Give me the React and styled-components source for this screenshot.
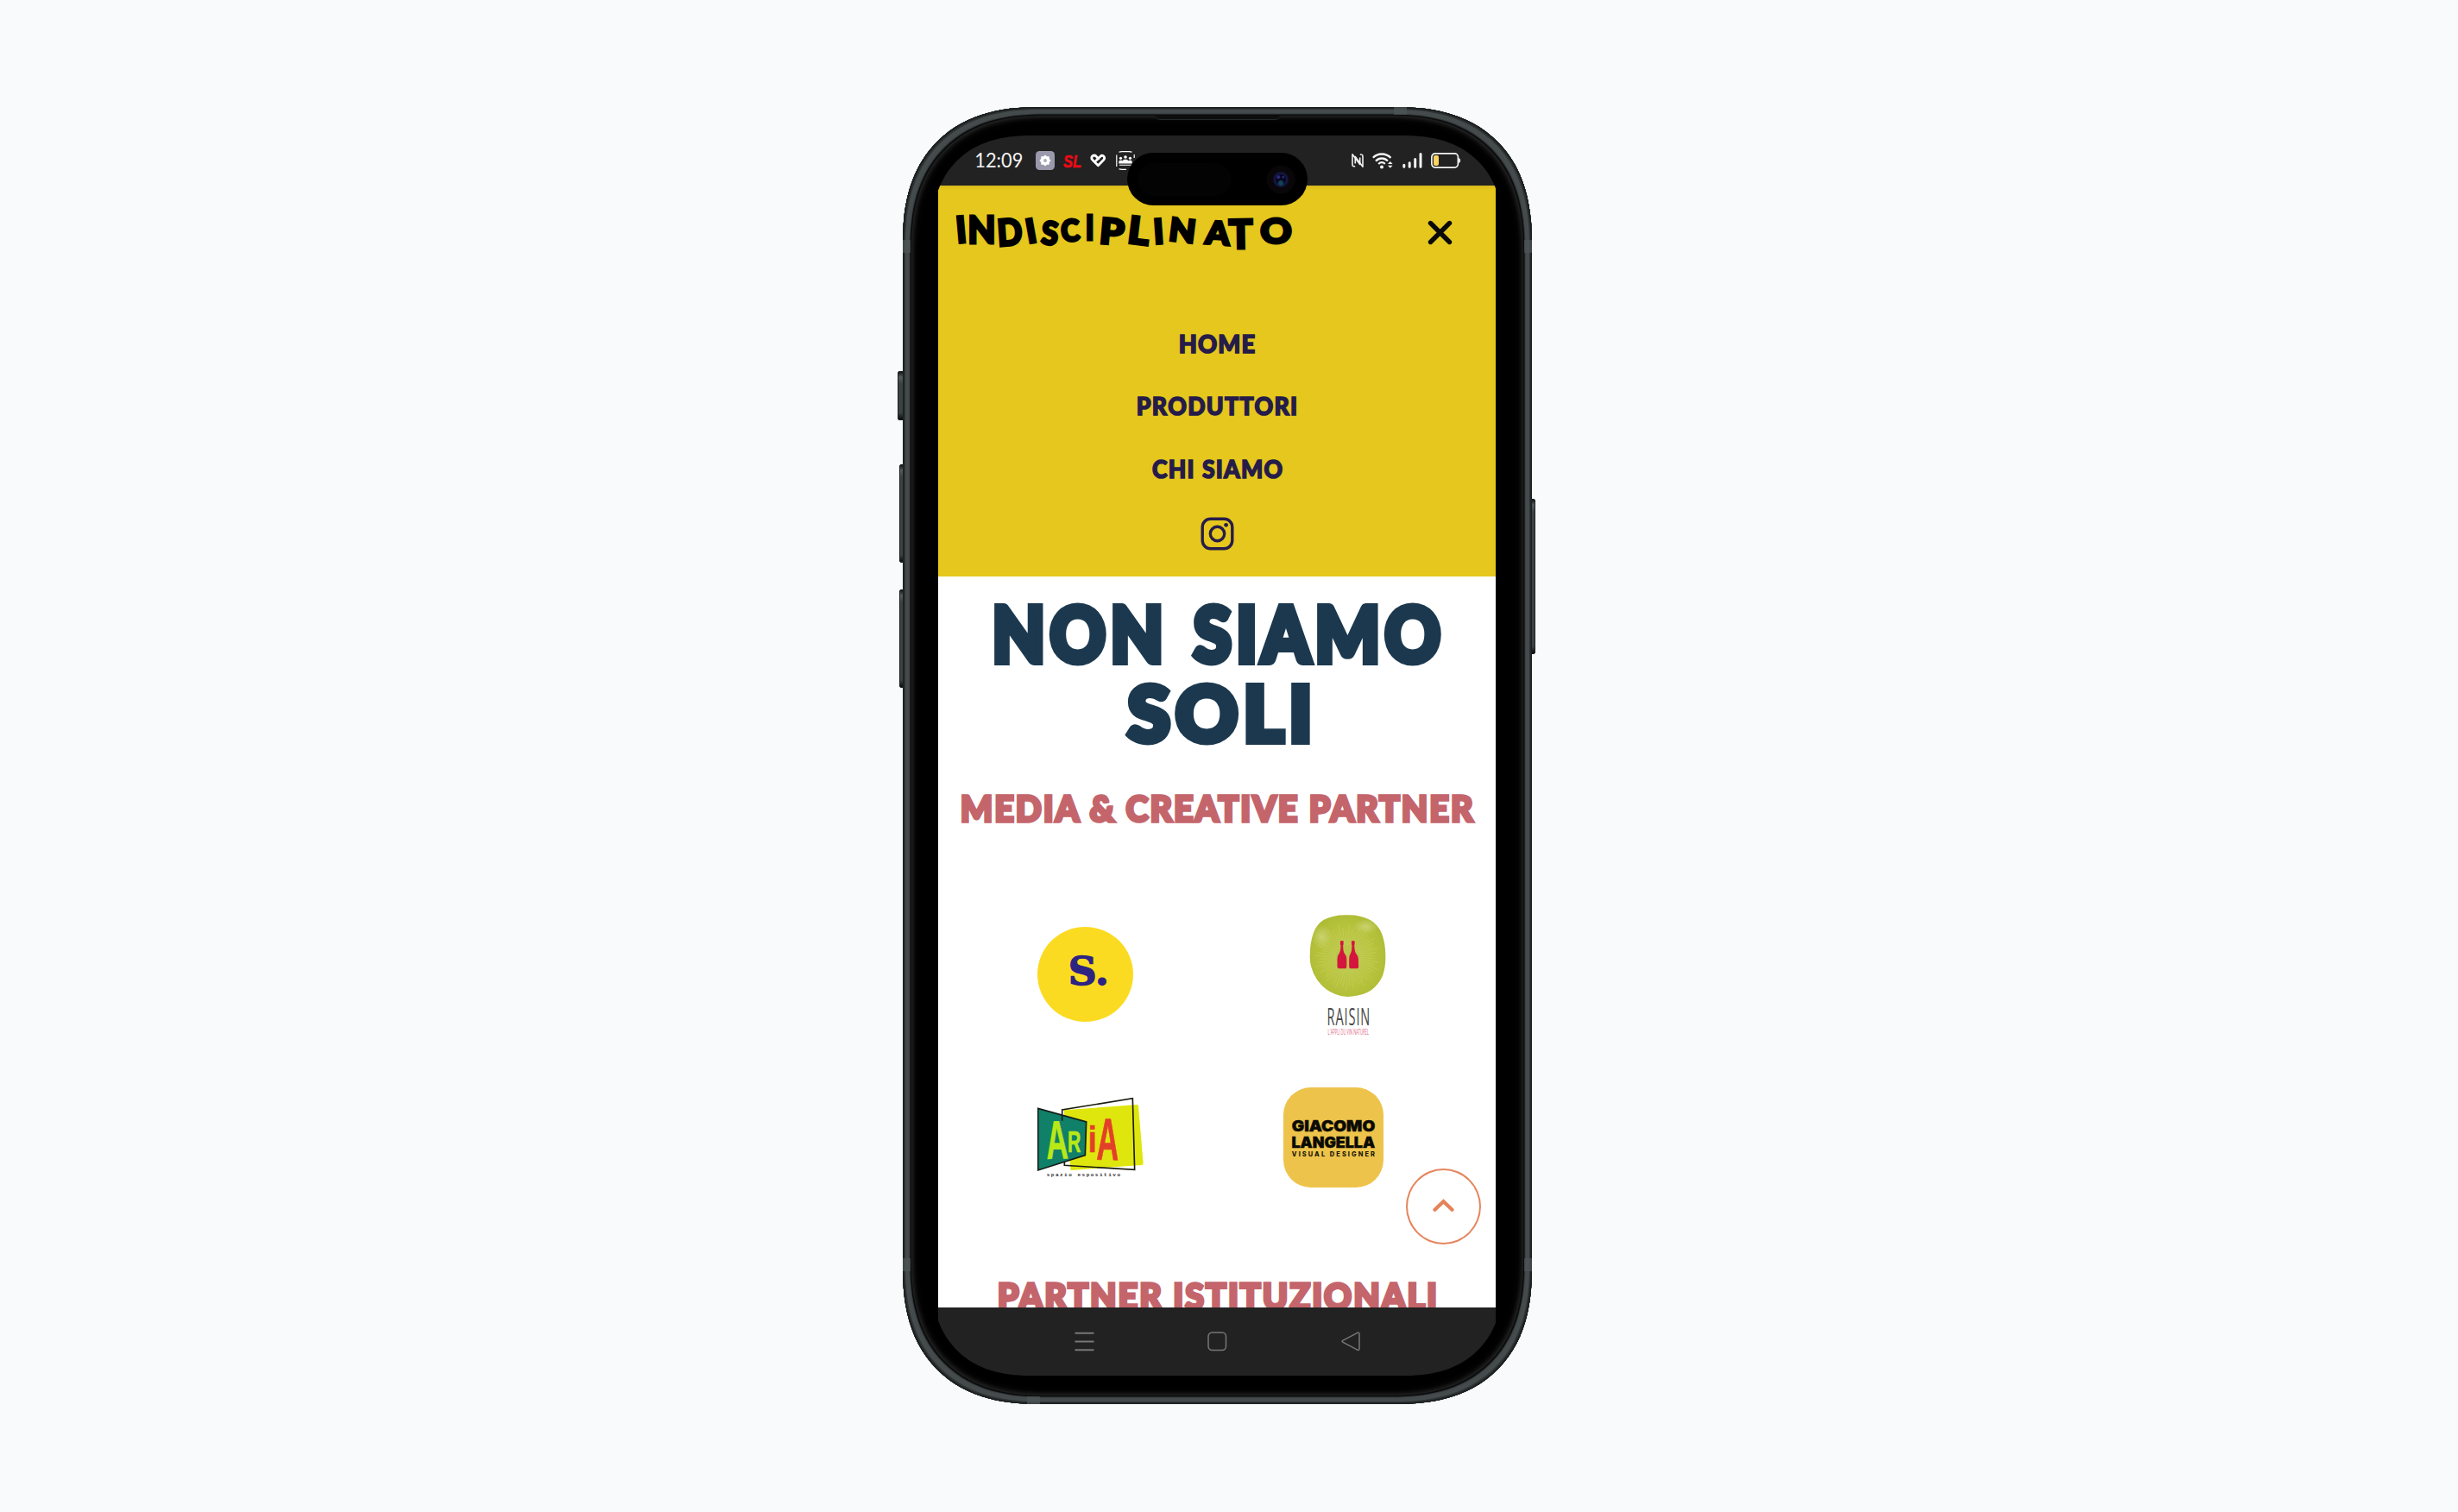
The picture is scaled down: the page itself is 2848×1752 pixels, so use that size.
import React, { useMemo } from "react";
import styled, { createGlobalStyle } from "styled-components";

const GlobalStyle = createGlobalStyle`
  * { box-sizing: border-box; }
  html, body { margin: 0; background: #f8fafc; }
  h1, h2, p, nav, ul { margin: 0; padding: 0; }
`;

const DISPLAY = 'Lato, "Liberation Sans", sans-serif';

/* ---------- text fitted to an exact cap height and ink width ---------- */

const FitBox = styled.span`
  display: block;
  flex: none;
  width: ${(p) => p.$w}px;
  height: ${(p) => p.$h}px;
  color: ${(p) => p.$color};
  white-space: pre;
`;

const FitInk = styled.span`
  display: inline-block;
  vertical-align: top;
  transform-origin: 0 0;
  font-family: ${(p) => p.$family};
  font-weight: ${(p) => p.$weight};
  font-style: ${(p) => (p.$italic ? "italic" : "normal")};
  line-height: ${(p) => p.$h}px;
  word-spacing: ${(p) => p.$wordGap}em;
  letter-spacing: ${(p) => p.$letterGap}em;
  -webkit-text-stroke: ${(p) => p.$stroke}px currentColor;
  stroke-linejoin: round;
`;

function Fit({
  children,
  w,
  h,
  color,
  family = DISPLAY,
  weight = 900,
  stroke = 0,
  italic = false,
  wordGap = 0,
  letterGap = 0,
}) {
  const fitted = useMemo(() => {
    const ctx = document.createElement("canvas").getContext("2d");
    const style = italic ? "italic " : "";
    ctx.font = `${style}${weight} 200px ${family}`;
    const cap = ctx.measureText("H").actualBoundingBoxAscent / 200;
    const m = ctx.measureText(children);
    const size = (h - stroke) / cap;
    const k = size / 200;
    const left = -m.actualBoundingBoxLeft * k;
    const spaces = children.split(" ").length - 1;
    const extra = (spaces * wordGap + (children.length - 1) * letterGap) * size;
    const ink = (m.actualBoundingBoxRight + m.actualBoundingBoxLeft) * k + extra;
    const scale = w / (ink + stroke);
    const baseline = h / 2 + ((m.fontBoundingBoxAscent - m.fontBoundingBoxDescent) * k) / 2;
    return {
      fontSize: size,
      transform: `translate(${(stroke / 2 - left) * scale}px, ${h - stroke / 2 - baseline}px) scaleX(${scale})`,
    };
  }, [children, w, h, family, weight, stroke, italic, wordGap, letterGap]);
  return (
    <FitBox $w={w} $h={h} $color={color}>
      <FitInk
        $h={h}
        $family={family}
        $weight={weight}
        $stroke={stroke}
        $italic={italic}
        $wordGap={wordGap}
        $letterGap={letterGap}
        style={fitted}
      >
        {children}
      </FitInk>
    </FitBox>
  );
}

/* ---------- device ---------- */

const Page = styled.main`
  width: 2848px;
  height: 1752px;
  padding: 124px 0 0 1046px;
  background: #f8fafc;
  overflow: hidden;
`;

const Device = styled.div`
  position: relative;
  z-index: 0;
  width: 729px;
`;

const Phone = styled.div`
  position: relative;
  width: 729px;
  height: 1503px;
  padding: 33px;
  border-radius: 134px;
  background: #000;
  box-shadow:
    inset 0 0 0 1.5px #1b1f20,
    inset 0 0 0 3px #2e3334,
    inset 0 0 0 7.5px #454b4d,
    inset 0 0 0 8.5px #353b3c,
    inset 0 0 0 10px #0b0c0c,
    inset 0 0 5px 11px #2b2b2b,
    inset 0 0 9px 13px #111;
  @supports (corner-shape: squircle) {
    border-radius: 158px;
    corner-shape: superellipse(1.25);
  }
`;

const SideKey = styled.i`
  position: absolute;
  z-index: -1;
  top: ${(p) => p.$top}px;
  ${(p) => p.$side}: -${(p) => p.$out}px;
  width: 10px;
  height: ${(p) => p.$h}px;
  border-radius: 2px;
  border: 1px solid #1b1e1f;
  background: linear-gradient(#151717, #565d5f 6px, #3c4243 14px, #3c4243 calc(100% - 8px), #0c0d0d);
`;

const Antenna = styled.i`
  position: absolute;
  background: #4d5455;
  opacity: 0.75;
  ${(p) => p.$side}: 0;
  ${(p) => (p.$vertical ? `top: ${p.$at}px; width: 9px; height: 15px;` : `left: ${p.$at}px; width: 15px; height: 9px;`)}
`;

const Speaker = styled.i`
  position: absolute;
  top: 10px;
  left: 293px;
  width: 144px;
  height: 5px;
  border-radius: 0 0 5px 5px;
  background: #0d0d0d;
  border-bottom: 1px solid #262728;
`;

const Screen = styled.div`
  display: flex;
  flex-direction: column;
  width: 663px;
  height: 1437px;
  padding: 0 9px 0 8px;
  overflow: hidden;
  border-radius: 99px;
  background: #000;
  @supports (corner-shape: squircle) {
    border-radius: 117px;
    corner-shape: superellipse(1.25);
  }
`;

const Island = styled.div`
  position: absolute;
  top: 53px;
  left: 260px;
  width: 209px;
  height: 61px;
  padding: 11px 12px;
  border-radius: 31px;
  background: #000;
  display: flex;
  justify-content: space-between;
  align-items: center;
`;

const Sensor = styled.i`
  width: 109px;
  height: 38px;
  border-radius: 19px;
  background: #030303;
`;

const Lens = styled.i`
  width: 34px;
  height: 34px;
  margin-right: 2px;
  border-radius: 50%;
  background:
    radial-gradient(circle at 42% 42%, #2a2a78 0 1.5px, transparent 2.5px),
    radial-gradient(circle at 58% 42%, #26266a 0 1px, transparent 2px),
    radial-gradient(circle at 50% 62%, #0d4658 0 2px, transparent 4px),
    radial-gradient(circle, #05051c 0 5px, #17174a 7px, #10102c 8.5px, #09060a 9.5px 16px, #000 17px);
`;

/* ---------- status bar ---------- */

const StatusBar = styled.header`
  flex: none;
  display: flex;
  justify-content: space-between;
  align-items: center;
  height: 58px;
  padding: 0 40px 0 44px;
  background: #222;
`;

const StatusGroup = styled.div`
  display: flex;
  align-items: center;
  gap: ${(p) => p.$gap}px;
`;

const TimeSlot = styled.div`
  margin-right: 5px;
`;

function AppBadge() {
  return (
    <svg width="22" height="22" viewBox="0 0 22 22">
      <rect width="22" height="22" rx="4.5" fill="#9a98ab" />
      <path d="M11 4.4l2 1.8 2.7.1.1 2.7 1.8 2-1.8 2-.1 2.7-2.7.1-2 1.8-2-1.8-2.7-.1-.1-2.7-1.8-2 1.8-2 .1-2.7 2.7-.1z" fill="#fff" />
      <circle cx="11" cy="11" r="1.9" fill="#aaa8b8" />
    </svg>
  );
}

function HeartIcon() {
  return (
    <svg width="19" height="16" viewBox="0 0 19 16" fill="none" stroke="#fff" strokeWidth="2.8" strokeLinecap="round" strokeLinejoin="round">
      <path d="M6.8 8.2L12 3.2c1.2-1.3 3-1.3 4 .1 1 1.300.8 2.800-.3 4L9.400 13.800 3 7.400C1.700 6 1.500 4.300 2.600 3c1.200-1.400 3-1.300 4.300-.1L9.700 6" />
    </svg>
  );
}

function PeopleIcon() {
  return (
    <svg width="22" height="22" viewBox="0 0 22 22">
      <path d="M.8 18V4.5M3.5 1.2Q5 .7 7 .7h8q2.500 0 3.500.5M3.500 20.800q1.500.5 3.500.5h5M21.200 4v4" fill="none" stroke="#fff" strokeWidth="1.2" />
      <g fill="#fff">
        <circle cx="5.5" cy="8.3" r="1.6" />
        <circle cx="11" cy="7" r="1.8" />
        <circle cx="16.5" cy="8.3" r="1.6" />
        <path d="M3.300 14.500v-2q0-1.700 1.700-1.700h1.500q1 0 1.300.8.500-1.800 2-1.800h2.400q1.500 0 2 1.800.3-.8 1.300-.8H17q1.700 0 1.700 1.700v2zM4 15.800h14v1H4z" />
      </g>
    </svg>
  );
}

function NfcIcon() {
  return (
    <svg width="14" height="18" viewBox="0 0 14 18" fill="none" stroke="#f2f2f2" strokeWidth="1.6" strokeLinejoin="round">
      <path d="M4.200 15.800Q1 16 1 14V1.800L9.700 13.500V5.500" />
      <path d="M9.800 2Q13 1.800 13 4v12.200L4.300 4.500v8" />
    </svg>
  );
}

function WifiIcon() {
  return (
    <svg width="24" height="19" viewBox="0 0 24 19" fill="none" stroke="#f4f4f4" strokeWidth="2.3">
      <path d="M.8 5.800Q5 1.500 11 1.500T21.500 5.800" />
      <path d="M4 9.600Q7 6.500 11 6.500t7 3" />
      <path d="M7.200 13Q9 11.200 11 11.200t3.800 1.600" />
      <circle cx="11" cy="16.4" r="2" fill="#f4f4f4" stroke="none" />
      <path d="M18 13l2.800-3 2.800 3zM18 14.800l2.800 3 2.800-3z" fill="#f4f4f4" stroke="none" />
    </svg>
  );
}

function SignalIcon() {
  return (
    <svg width="23" height="18" viewBox="0 0 23 18" stroke="#f4f4f4" strokeWidth="3" strokeLinecap="round">
      <path d="M1.800 14.200v2M8.200 11.700v4.500M14.700 7.500v8.700M21 1.500v14.700" />
    </svg>
  );
}

function BatteryIcon() {
  return (
    <svg width="35" height="18" viewBox="0 0 35 18">
      <rect x=".9" y=".9" width="30.5" height="16.2" rx="4" fill="none" stroke="#f4f4f4" strokeWidth="1.7" />
      <rect x="3" y="3" width="6" height="12" rx="2" fill="#fbd560" />
      <path d="M32.200 6q2 .5 2 3t-2 3z" fill="#f4f4f4" />
    </svg>
  );
}

/* ---------- menu ---------- */

const MenuPanel = styled.section`
  flex: none;
  height: 452.5px;
  background: linear-gradient(#d8bb1c, #e5c71d 5px);
`;

const MenuTop = styled.div`
  display: flex;
  justify-content: space-between;
  padding: 29px 50px 0 20.5px;
  height: 108px;
`;

const CloseButton = styled.button`
  display: block;
  width: 29px;
  height: 29px;
  margin-top: 10.5px;
  padding: 0;
  border: 0;
  background: none;
`;

const MenuList = styled.nav`
  display: flex;
  flex-direction: column;
  align-items: center;
  padding-top: 64.5px;
  gap: 50px;
`;

const InstagramLink = styled.a`
  display: block;
  height: 39px;
  margin-top: -6px;
`;

/* Brush lettering: each letter has its own gap before it, drop, size, tilt. */
const LETTERS = [
  { ch: "I", gap: 1, drop: 5, w: 9, h: 34, turn: -5 },
  { ch: "N", gap: 5, drop: 5, w: 29, h: 35 },
  { ch: "D", gap: 5.5, drop: 7.5, w: 27.5, h: 34, turn: -4 },
  { ch: "I", gap: 5, drop: 8, w: 9, h: 31, turn: -10 },
  { ch: "S", gap: 7, drop: 11, w: 20.5, h: 30, turn: 5 },
  { ch: "C", gap: 2.5, drop: 9, w: 23, h: 28, turn: -4 },
  { ch: "I", gap: 7.5, drop: 4, w: 7.5, h: 32 },
  { ch: "P", gap: 9, drop: 7.5, w: 27.5, h: 33, turn: 5 },
  { ch: "L", gap: 5.5, drop: 6, w: 24, h: 35, turn: 7 },
  { ch: "I", gap: 5, drop: 7.5, w: 9, h: 32, turn: -4 },
  { ch: "N", gap: 9.5, drop: 8, w: 28, h: 30, turn: 7 },
  { ch: "A", gap: 10.5, drop: 11, w: 32, h: 30, turn: 4 },
  { ch: "T", gap: -4, drop: 9, w: 29.5, h: 37, turn: -1 },
  { ch: "O", gap: 7.5, drop: 7.5, w: 37, h: 32.5 },
];

const WordmarkRow = styled.h2`
  display: flex;
  align-items: flex-start;
  height: 60px;
`;

const Letter = styled.span`
  flex: none;
  margin: ${(p) => p.$drop}px 0 0 ${(p) => p.$gap}px;
  transform: rotate(${(p) => p.$turn || 0}deg);
`;

function Wordmark() {
  return (
    <WordmarkRow aria-label="Indisciplinato">
      {LETTERS.map((l, i) => (
        <Letter key={i} $gap={l.gap} $drop={l.drop} $turn={l.turn}>
          <Fit w={l.w} h={l.h} color="#000" stroke={l.ch === "I" ? 1.2 : 3}>{l.ch}</Fit>
        </Letter>
      ))}
    </WordmarkRow>
  );
}

/* ---------- partners ---------- */

const Content = styled.section`
  flex: none;
  height: 847px;
  overflow: hidden;
  display: flex;
  flex-direction: column;
  align-items: center;
  background: #fff;
  position: relative;
`;

const Title = styled.h1`
  display: flex;
  flex-direction: column;
  align-items: center;
  gap: 20.5px;
  padding: 32px 0 0 2px;
`;

const Subtitle = styled.h2`
  margin-top: ${(p) => p.$top}px;
  padding-left: ${(p) => p.$inset}px;
`;

const LogoGrid = styled.div`
  align-self: stretch;
  display: grid;
  grid-template-columns: 285px 119px;
  grid-template-rows: 139px 116px;
  row-gap: 61px;
  margin-top: 105.5px;
  padding-left: 115px;
`;

const SLogo = styled.div`
  width: 111px;
  height: 110px;
  margin-top: 14.5px;
  padding: 33px 0 0 37.5px;
  border-radius: 50%;
  background: #fbdb21;
`;

const RaisinLogo = styled.div`
  display: flex;
  flex-direction: column;
  align-items: center;
  width: 89px;
  margin-left: 30px;
`;

const RaisinName = styled.div`
  display: flex;
  flex-direction: column;
  gap: 4.5px;
  padding: 13.5px 0 0 2px;
`;

const AriaLogo = styled.div`
  margin-top: 11.5px;
`;

const AriaText = styled.text`
  font-family: ${(p) => p.$family || '"Liberation Sans", sans-serif'};
  font-weight: 700;
`;

const GiacomoLogo = styled.div`
  display: flex;
  flex-direction: column;
  align-items: center;
  gap: 5px;
  width: 116px;
  height: 116px;
  padding-top: 38.5px;
  border-radius: 32px;
  background: #edc34b;
`;

const ToTop = styled.button`
  position: absolute;
  top: 686.5px;
  left: 542px;
  display: flex;
  justify-content: center;
  width: 87px;
  height: 88px;
  padding: 32.5px 0 0;
  border: 2px solid #e5865f;
  border-radius: 50%;
  background: #fff;
`;

function RaisinMark() {
  const rays = Array.from({ length: 56 }, (_, i) => {
    const a = (i / 56) * Math.PI * 2;
    const r = 30 + ((i * 7) % 11);
    return `M${44.5 + Math.cos(a) * 14} ${50 + Math.sin(a) * 14}L${44.5 + Math.cos(a + 0.05) * r} ${50 + Math.sin(a + 0.05) * r}`;
  }).join("");
  return (
    <svg width="89" height="97" viewBox="0 0 89 97">
      <defs>
        <radialGradient id="grape" cx="50%" cy="52%" r="55%">
          <stop offset="0" stopColor="#bcc84d" />
          <stop offset=".6" stopColor="#b9c43f" />
          <stop offset="1" stopColor="#aebc35" />
        </radialGradient>
        <radialGradient id="sheen">
          <stop offset="0" stopColor="#d3da86" stopOpacity=".7" />
          <stop offset="1" stopColor="#d3da86" stopOpacity="0" />
        </radialGradient>
      </defs>
      <path d="M16 6Q28 0 43 .3 58-.5 71 6 81 12 85 23 89 34 89 48 89.500 61 85.500 72 81 82 72 89 63 95 50 96 39 97.500 30 93.500 18 89 10.500 79 4 71 1.500 61-.5 54 .2 46 0 34 4 22 8 11 16 6z" fill="url(#grape)" />
      <ellipse cx="14" cy="26" rx="12" ry="14" fill="url(#sheen)" />
      <ellipse cx="66" cy="14" rx="15" ry="9" fill="url(#sheen)" />
      <path d={rays} stroke="#d0d774" strokeWidth=".8" opacity=".5" />
      <g fill="#d4163e">
        <path d="M35.800 31q1.900-.9 3.800 0v4l-.5.6q0 7 1.200 9 3 3.500 3 7.500V61q-.2 2-1.500 2.200H34q-1.700-.2-1.700-2.200v-8.500q0-4.500 2.600-7.800 1.300-2 1.400-9l-.5-.7z" />
        <path d="M49 31q1.900-.9 3.800 0v4l-.5.6q.3 7 1.500 9 3 3.500 3.300 7.500l.2 9q-.2 2-1.500 2.200h-8q-1.500-.2-1.600-2.200v-8.500q0-4.500 2-7.800 1.200-2 1.300-9l-.5-.7z" />
      </g>
    </svg>
  );
}

function AriaMark() {
  return (
    <svg width="125" height="96" viewBox="66 690 375 288">
      <path d="M158 736L412 717q5 0 5 4l17 200q0 6-5 6L182 945z" fill="#dfe60d" />
      <path d="M68 730L236 777L232 893L68 945z" fill="#108069" stroke="#161d18" strokeWidth="5" />
      <path d="M152 773V735L397 695L404 943L160 928V915" fill="none" stroke="#1c1d10" strokeWidth="5" />
      <g fill="#b9e817" stroke="#b9e817" strokeWidth="2">
        <AriaText transform="translate(98 906) rotate(-2) scale(.56 1)" fontSize="188">A</AriaText>
        <AriaText transform="translate(171 881) scale(.6 1)" fontSize="106">R</AriaText>
      </g>
      <g fill="#e3402a" stroke="#e3402a" strokeWidth="2">
        <AriaText transform="translate(242 882) scale(.84 1)" fontSize="128">i</AriaText>
        <AriaText transform="translate(271 908) rotate(1) scale(.52 1)" fontSize="206">A</AriaText>
      </g>
      <AriaText x="98" y="967" fontSize="18" fill="#333" textLength="256" $family='"Liberation Mono", monospace'>
        spazio espositivo
      </AriaText>
    </svg>
  );
}

/* ---------- system navigation ---------- */

const SystemNav = styled.footer`
  flex: 1;
  display: flex;
  align-items: flex-start;
  gap: 131.5px;
  padding: 28px 0 0 157.5px;
  background: #222;
`;

export default function App() {
  const ink = "#261c49";
  const rose = "#c4656b";
  const navy = "#1b384e";
  const geometric = 'Inter, "Open Sans", sans-serif';
  return (
    <>
      <GlobalStyle />
      <Page>
        <Device>
          <Phone>
            <Screen>
              <StatusBar>
                <StatusGroup $gap={10.5}>
                  <TimeSlot>
                    <Fit w={53} h={16.5} color="#f4f4f4" family="Lato, sans-serif" weight={400}>12:09</Fit>
                  </TimeSlot>
                  <AppBadge />
                  <Fit w={20.5} h={15} color="#ee0a16" family='"Liberation Sans", sans-serif' weight={700} stroke={0.6} italic>SL</Fit>
                  <HeartIcon />
                  <PeopleIcon />
                </StatusGroup>
                <StatusGroup $gap={10.5}>
                  <NfcIcon />
                  <WifiIcon />
                  <SignalIcon />
                  <BatteryIcon />
                </StatusGroup>
              </StatusBar>

              <MenuPanel>
                <MenuTop>
                  <Wordmark />
                  <CloseButton aria-label="Chiudi">
                    <svg width="29" height="29" viewBox="0 0 29 29" stroke="#0a0a08" strokeWidth="5.4" strokeLinecap="round">
                      <path d="M3.500 3.500L25.500 25.500M25.500 3.500L3.500 25.500" />
                    </svg>
                  </CloseButton>
                </MenuTop>
                <MenuList>
                  <Fit w={87} h={22.5} color={ink} stroke={1.6} letterGap={0.04}>HOME</Fit>
                  <Fit w={184} h={22.5} color={ink} stroke={1.6} letterGap={0.05}>PRODUTTORI</Fit>
                  <Fit w={151} h={22.5} color={ink} stroke={1.6} wordGap={0.03} letterGap={0.045}>CHI SIAMO</Fit>
                  <InstagramLink aria-label="Instagram">
                    <svg width="39" height="39" viewBox="0 0 39 39" fill="none" stroke={ink} strokeWidth="3.4">
                      <rect x="2.2" y="2.2" width="34.6" height="34.6" rx="9.5" />
                      <circle cx="19.5" cy="19.5" r="8.2" />
                      <circle cx="29.6" cy="9.3" r="2.4" fill={ink} stroke="none" />
                    </svg>
                  </InstagramLink>
                </MenuList>
              </MenuPanel>

              <Content>
                <Title>
                  <Fit w={518} h={71.5} color={navy} stroke={8} wordGap={0.06} letterGap={0.075}>NON SIAMO</Fit>
                  <Fit w={214} h={71.5} color={navy} stroke={8} letterGap={0.075}>SOLI</Fit>
                </Title>
                <Subtitle $top={56.5} $inset={3}>
                  <Fit w={596} h={34.5} color={rose} stroke={3.6} letterGap={0.05}>{"MEDIA & CREATIVE PARTNER"}</Fit>
                </Subtitle>
                <LogoGrid>
                  <SLogo>
                    <Fit w={42} h={34.5} color="#2d2382" family='"DejaVu Serif", serif' weight={700} stroke={1.4}>S.</Fit>
                  </SLogo>
                  <RaisinLogo>
                    <RaisinMark />
                    <RaisinName>
                      <Fit w={47} h={19.5} color="#4a4a4a" family='"Open Sans", sans-serif' weight={400} letterGap={0.06}>RAISIN</Fit>
                      <Fit w={47} h={6} color="#e06a88" family='"Open Sans", sans-serif' weight={400}>L'APPLI DU VIN NATUREL</Fit>
                    </RaisinName>
                  </RaisinLogo>
                  <AriaLogo>
                    <AriaMark />
                  </AriaLogo>
                  <GiacomoLogo>
                    <Fit w={96} h={13.5} color="#0b0a04" family={geometric} stroke={0.5}>GIACOMO</Fit>
                    <Fit w={96} h={13.5} color="#0b0a04" family={geometric} stroke={0.5}>LANGELLA</Fit>
                    <Fit w={96} h={5.5} color="#1a1608" family={geometric} weight={800} letterGap={0.28}>VISUAL DESIGNER</Fit>
                  </GiacomoLogo>
                </LogoGrid>
                <Subtitle $top={109} $inset={0}>
                  <Fit w={507} h={34.5} color={rose} stroke={3.6} letterGap={0.05}>PARTNER ISTITUZIONALI</Fit>
                </Subtitle>
                <ToTop aria-label="Torna su">
                  <svg width="25" height="16" viewBox="0 0 25 16" fill="none" stroke="#e5835a" strokeWidth="4.2" strokeLinecap="round" strokeLinejoin="miter">
                    <path d="M2.500 12.800L12.500 3.200L22.500 12.800" />
                  </svg>
                </ToTop>
              </Content>

              <SystemNav>
                <svg width="23" height="23" viewBox="0 0 23 23" stroke="#777" strokeWidth="1.9">
                  <path d="M.5 1.700h22M.5 11.500h22M.5 21.300h22" />
                </svg>
                <svg width="23" height="23" viewBox="0 0 23 23" fill="none" stroke="#777" strokeWidth="1.5">
                  <rect x="1" y="1" width="20.5" height="20.5" rx="4.5" />
                </svg>
                <svg width="23" height="23" viewBox="0 0 23 23" fill="none" stroke="#777" strokeWidth="1.5" strokeLinejoin="round">
                  <path d="M1.700 10.300L18.800 1.300Q21 .7 21 2.700V19.700Q21 22 18.800 21.200L1.700 12.200Q.5 11.300 1.700 10.300z" />
                </svg>
              </SystemNav>
            </Screen>
            <Speaker />
            <Island>
              <Sensor />
              <Lens />
            </Island>
            <Antenna $side="left" $vertical $at={154} />
            <Antenna $side="left" $vertical $at={1334} />
            <Antenna $side="right" $vertical $at={154} />
            <Antenna $side="right" $vertical $at={1334} />
            <Antenna $side="top" $at={569} />
            <Antenna $side="bottom" $at={144} />
          </Phone>
          <SideKey $side="left" $top={306} $h={57} $out={6} />
          <SideKey $side="left" $top={414} $h={114} $out={4} />
          <SideKey $side="left" $top={559} $h={114} $out={4} />
          <SideKey $side="right" $top={454} $h={180} $out={4} />
        </Device>
      </Page>
    </>
  );
}
